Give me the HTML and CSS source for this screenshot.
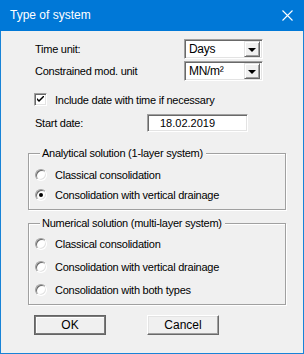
FILE: index.html
```html
<!DOCTYPE html>
<html lang="en">
<head>
    <meta charset="UTF-8">
    <title>Type of system</title>
    <link rel="stylesheet" href="styles.css">
</head>
<body>
    <div class="window">
        <div class="titlebar">
            <span class="title">Type of system</span>
            <svg class="close" width="11" height="11" viewBox="0 0 11 11">
                <path d="M0.5 0.5 L10.5 10.5 M10.5 0.5 L0.5 10.5" stroke="#fff" stroke-width="1.1" fill="none"/>
            </svg>
        </div>

        <div class="content">
            <div class="row row-combo">
                <span class="label">Time unit:</span>
                <div class="combo"><span class="combo-text">Days</span><span class="drop"><span class="arrow"></span></span></div>
            </div>
            <div class="row row-combo second">
                <span class="label">Constrained mod. unit</span>
                <div class="combo"><span class="combo-text">MN/m²</span><span class="drop"><span class="arrow"></span></span></div>
            </div>

            <div class="row row-check">
                <span class="checkbox">
                    <svg width="7" height="7" viewBox="0 0 7 7"><path d="M0 2 L0 4 L2 6 L7 1 L7 -1 L2 4 Z" fill="#000"/></svg>
                </span>
                <span class="check-label">Include date with time if necessary</span>
            </div>

            <div class="row row-date">
                <span class="label">Start date:</span>
                <div class="textbox">18.02.2019</div>
            </div>

            <div class="group first">
                <div class="legend">Analytical solution (1-layer system)</div>
                <div class="option"><span class="radio"></span><span>Classical consolidation</span></div>
                <div class="option"><span class="radio checked"></span><span>Consolidation with vertical drainage</span></div>
            </div>

            <div class="group second">
                <div class="legend">Numerical solution (multi-layer system)</div>
                <div class="option"><span class="radio"></span><span>Classical consolidation</span></div>
                <div class="option"><span class="radio"></span><span>Consolidation with vertical drainage</span></div>
                <div class="option"><span class="radio"></span><span>Consolidation with both types</span></div>
            </div>

            <div class="buttons">
                <button class="btn default">OK</button>
                <button class="btn">Cancel</button>
            </div>
        </div>
    </div>
</body>
</html>
```

FILE: styles.css
```css
html, body { margin: 0; padding: 0; }
body { font-family: "Liberation Sans", Arial, sans-serif; font-size: 11px; letter-spacing: -0.25px; color: #000; }

.window { width: 304px; height: 354px; box-sizing: border-box; background: #f0f0f0; border: 1px solid #1883d7; border-top: none; }
.titlebar { height: 31px; margin: 0 -1px; background: #0078d7; color: #fff; display: flex; align-items: center; justify-content: space-between; padding: 0 10px 1px 10px; box-sizing: border-box; }
.title { font-size: 12px; letter-spacing: 0; }
.close { margin-right: 1px; }

.content { padding-top: 8px; }
.row { display: flex; align-items: center; padding-left: 34px; }
.label { width: 149px; }

.row-combo { height: 20px; }
.row-combo.second { margin-top: 2px; }
.combo { width: 79px; height: 20px; box-sizing: border-box; background: #fff; border: 1px solid; border-color: #a0a0a0 #fff #fff #a0a0a0; box-shadow: inset 1px 1px 0 #696969, inset -1px -1px 0 #e3e3e3; display: flex; align-items: center; padding: 2px; }
.combo-text { flex: 1; padding-left: 2px; font-size: 12px; letter-spacing: -0.3px; }
.drop { width: 16px; height: 16px; box-sizing: border-box; background: #f0f0f0; border: 1px solid; border-color: #e3e3e3 #696969 #696969 #e3e3e3; box-shadow: inset 1px 1px 0 #fff, inset -1px -1px 0 #a0a0a0; display: flex; align-items: center; justify-content: center; }
.arrow { width: 0; height: 0; border-left: 4px solid transparent; border-right: 4px solid transparent; border-top: 4px solid #000; margin-top: 1px; }

.row-check { margin-top: 12px; height: 13px; padding-left: 33px; }
.checkbox { width: 13px; height: 13px; box-sizing: border-box; background: #fff; border: 1px solid; border-color: #a0a0a0 #fff #fff #a0a0a0; box-shadow: inset 1px 1px 0 #696969, inset -1px -1px 0 #e3e3e3; display: flex; align-items: center; justify-content: center; }
.check-label { margin-left: 8px; }

.row-date { margin-top: 8px; height: 18px; }
.label + .textbox { margin-left: -37px; }
.textbox { width: 101px; height: 18px; box-sizing: border-box; background: #fff; border: 1px solid; border-color: #a0a0a0 #fff #fff #a0a0a0; box-shadow: inset 1px 1px 0 #696969, inset -1px -1px 0 #e3e3e3; padding-left: 12px; line-height: 16px; letter-spacing: 0; }

.group { margin-left: 27px; width: 258px; box-sizing: border-box; border: 1px solid #a0a0a0; box-shadow: 1px 1px 0 #fff, inset 1px 1px 0 #fff; padding: 0 0 0 6px; }
.group.first { margin-top: 21px; height: 57px; }
.group.second { margin-top: 13px; height: 82px; }
.legend { width: fit-content; margin: -7px 0 0 5px; padding: 0 3px 0 2px; background: #f0f0f0; line-height: 13px; }
.option { display: flex; align-items: center; height: 12px; }
.group.first .legend + .option { margin-top: 9px; }
.group.first .option + .option { margin-top: 8px; }
.group.second .legend + .option { margin-top: 8px; }
.group.second .option + .option { margin-top: 11px; }
.radio { width: 12px; height: 12px; box-sizing: border-box; border-radius: 50%; background: #fff; border: 1px solid; border-color: #a0a0a0 #fff #fff #a0a0a0; box-shadow: inset 1px 1px 0 #696969, inset -1px -1px 0 #e3e3e3; margin-right: 8px; display: flex; align-items: center; justify-content: center; }
.radio.checked::after { content: ""; width: 4px; height: 4px; border-radius: 50%; background: #000; }

.buttons { display: flex; gap: 41px; padding-left: 33px; margin-top: 10px; }
.btn { width: 72px; height: 20px; box-sizing: border-box; font-family: inherit; font-size: 12px; letter-spacing: 0; background: #f0f0f0; border: 1px solid; border-color: #fff #696969 #696969 #fff; box-shadow: inset -1px -1px 0 #a0a0a0, inset 1px 1px 0 #e3e3e3; padding: 0; color: #000; }
.btn.default { border: 1px solid #646464; box-shadow: inset 1px 1px 0 #7a7a7a, inset -1px -1px 0 #7a7a7a, inset 2px 2px 0 #fff; }
```
